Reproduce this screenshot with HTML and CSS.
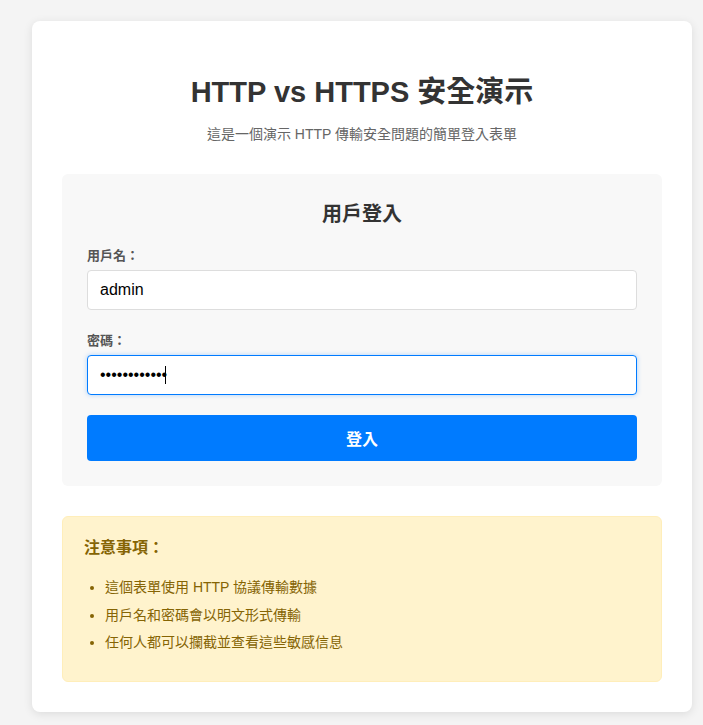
FILE: index.html
```html
<!DOCTYPE html>
<html lang="zh-Hant">
<head>
<meta charset="utf-8">
<title>HTTP vs HTTPS 安全演示</title>
<link rel="stylesheet" href="styles.css">
</head>
<body>
<div class="container">
  <header class="header">
    <h1 class="title">HTTP vs HTTPS 安全演示</h1>
    <p class="subtitle">這是一個演示 HTTP 傳輸安全問題的簡單登入表單</p>
  </header>
  <form class="login-box" onsubmit="return false;">
    <h2 class="login-title">用戶登入</h2>
    <div class="form-group">
      <label class="label" for="username">用戶名：</label>
      <input class="input" id="username" type="text" value="admin">
    </div>
    <div class="form-group form-group-last">
      <label class="label" for="password">密碼：</label>
      <div class="input-wrap">
        <input class="input input-focus" id="password" type="password" value="123456789012">
        <span class="caret"></span>
      </div>
    </div>
    <button class="btn" type="submit">登入</button>
  </form>
  <div class="notice">
    <h3 class="notice-title">注意事項：</h3>
    <ul class="notice-list">
      <li>這個表單使用 HTTP 協議傳輸數據</li>
      <li>用戶名和密碼會以明文形式傳輸</li>
      <li>任何人都可以攔截並查看這些敏感信息</li>
    </ul>
  </div>
</div>
</body>
</html>
```

FILE: styles.css
```css
* { box-sizing: border-box; }

body {
  margin: 0;
  background: #f4f4f4;
  font-family: "Liberation Sans", "Noto Sans CJK TC", sans-serif;
  color: #333;
}

.container {
  width: 660px;
  margin: 21px 0 14px 32px;
  padding: 30px;
  background: #fff;
  border-radius: 8px;
  box-shadow: 0 2px 10px rgba(0, 0, 0, 0.1);
}

.header {
  text-align: center;
  margin-top: 23px;
}

.title {
  margin: 0;
  font-size: 29px;
  line-height: 36px;
  font-weight: bold;
  color: #333;
}

.subtitle {
  margin: 14px 0 0;
  font-size: 14px;
  line-height: 20px;
  color: #666;
}

.login-box {
  margin-top: 30px;
  background: #f8f8f8;
  border-radius: 6px;
  padding: 26px 25px 25px;
}

.login-title {
  margin: 0 0 18px;
  text-align: center;
  font-size: 20px;
  line-height: 28px;
  font-weight: bold;
  color: #333;
}

.form-group {
  margin-bottom: 21px;
}

.form-group-last {
  margin-bottom: 20px;
}

.label {
  display: block;
  margin-bottom: 4px;
  font-size: 13px;
  line-height: 20px;
  font-weight: bold;
  color: #555;
}

.input-wrap {
  position: relative;
}

.input {
  display: block;
  width: 100%;
  height: 40px;
  padding: 0 12px;
  border: 1px solid #ddd;
  border-radius: 4px;
  background: #fff;
  font-family: "Liberation Sans", sans-serif;
  font-size: 16px;
  color: #000;
  outline: none;
}

.input-focus {
  border-color: #007bff;
  box-shadow: 0 0 5px rgba(0, 123, 255, 0.3);
}

.caret {
  position: absolute;
  left: 78px;
  top: 11px;
  width: 1px;
  height: 18px;
  background: #000;
}

.btn {
  display: block;
  width: 100%;
  height: 46px;
  border: none;
  border-radius: 4px;
  background: #007bff;
  color: #fff;
  font-family: "Liberation Sans", "Noto Sans CJK TC", sans-serif;
  font-size: 16px;
  font-weight: bold;
  cursor: pointer;
}

.notice {
  margin-top: 30px;
  background: #fff3cd;
  border: 1px solid #ffeeba;
  border-radius: 6px;
  padding: 20px 20px 20px 21px;
  color: #856404;
}

.notice-title {
  margin: 0;
  font-size: 16px;
  line-height: 22px;
  font-weight: bold;
}

.notice-list {
  margin: 17px 0 7px;
  padding-left: 21px;
  font-size: 14px;
  line-height: 22.5px;
}

.notice-list li {
  margin-bottom: 5px;
}
```
